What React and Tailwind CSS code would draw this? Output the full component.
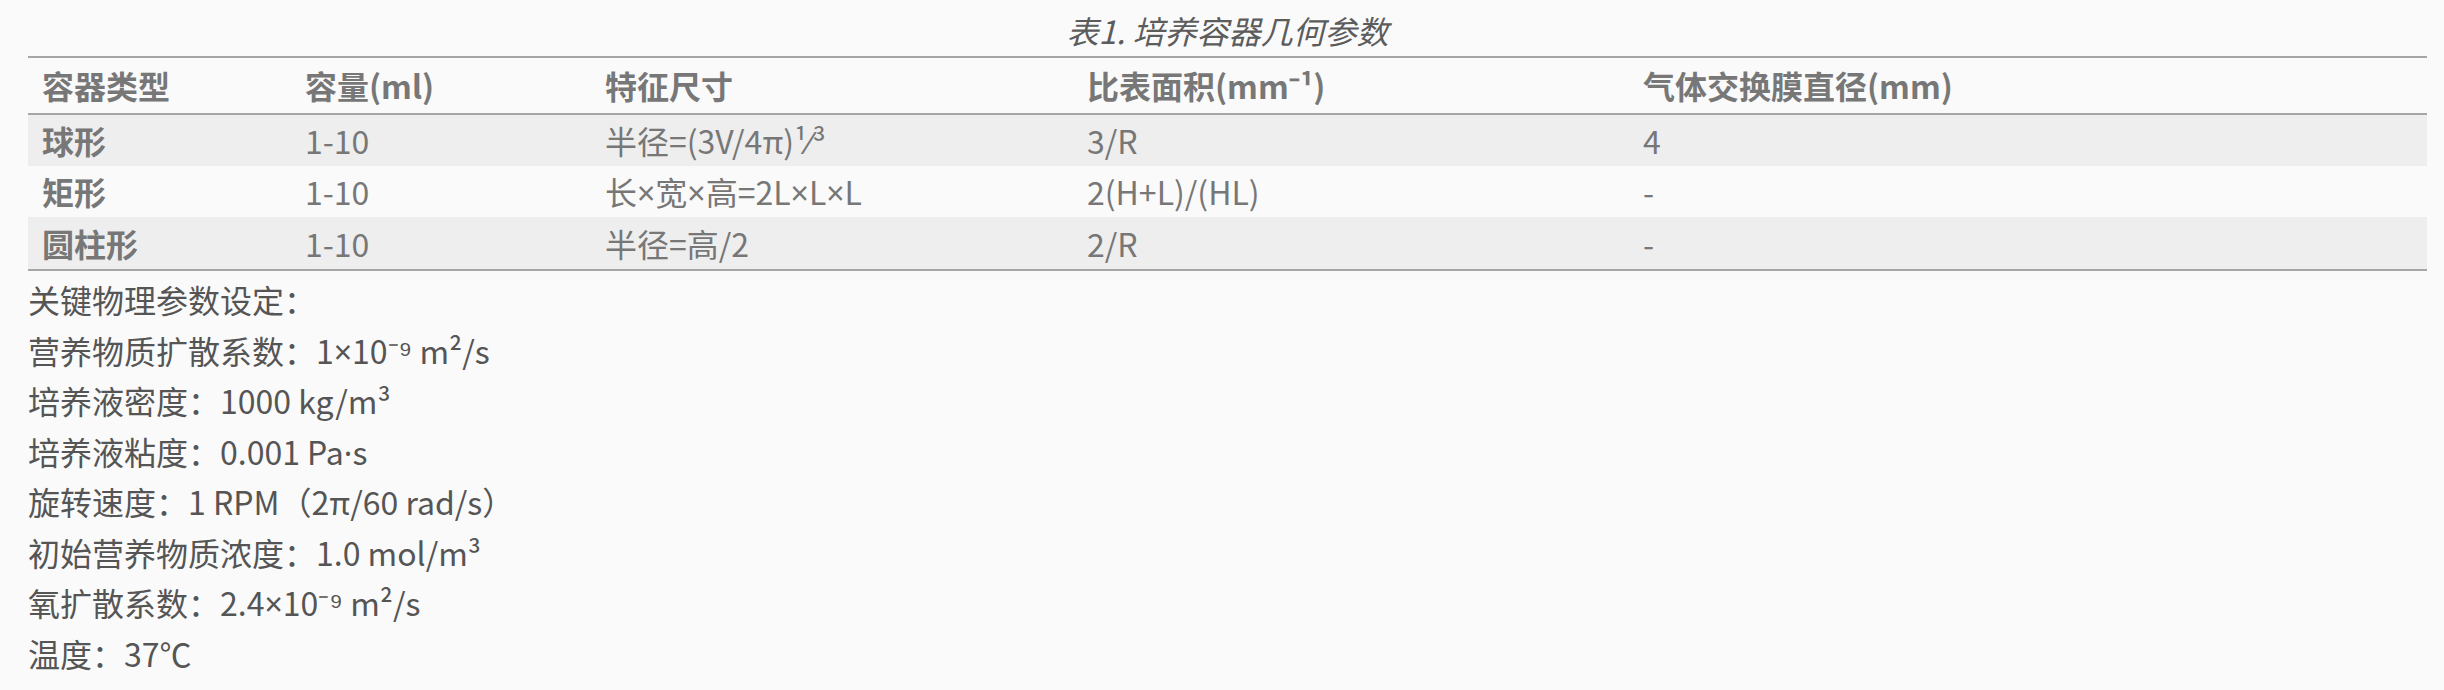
import React from "react";

const rows = [
  { type: "球形", volume: "1-10", size: "半径=(3V/4π)¹⁄³", ratio: "3/R", membrane: "4" },
  { type: "矩形", volume: "1-10", size: "长×宽×高=2L×L×L", ratio: "2(H+L)/(HL)", membrane: "-" },
  { type: "圆柱形", volume: "1-10", size: "半径=高/2", ratio: "2/R", membrane: "-" },
];

const params = [
  "关键物理参数设定：",
  "营养物质扩散系数：1×10⁻⁹ m²/s",
  "培养液密度：1000 kg/m³",
  "培养液粘度：0.001 Pa·s",
  "旋转速度：1 RPM（2π/60 rad/s）",
  "初始营养物质浓度：1.0 mol/m³",
  "氧扩散系数：2.4×10⁻⁹ m²/s",
  "温度：37℃",
];

const headers = ["容器类型", "容量(ml)", "特征尺寸", "比表面积(mm⁻¹)", "气体交换膜直径(mm)"];

// the CJK font draws × and · full width, so give them a latin face
const Txt = ({ children }) =>
  children.split(/([×·])/).map((part, i) =>
    part === "×" || part === "·" ? (
      <span key={i} className="font-['Noto_Sans',sans-serif] leading-none">
        {part}
      </span>
    ) : (
      part
    )
  );

const App = () => {
  return (
    <div className="min-h-[690px] w-full bg-[#fafafa] pl-[28px] pr-[17px] font-['Noto_Sans_CJK_SC',sans-serif] text-[32px]">
      <table className="w-full table-fixed border-separate border-spacing-0 text-left text-[#777777]">
        <caption className="pt-[5px] leading-[51px] italic text-[#5c5c5c]">
          表1. 培养容器几何参数
        </caption>
        <colgroup>
          <col className="w-[263px]" />
          <col className="w-[300px]" />
          <col className="w-[482px]" />
          <col className="w-[556px]" />
          <col />
        </colgroup>
        <thead>
          <tr>
            {headers.map((h) => (
              <th
                key={h}
                className="border-y-2 border-[#a6a6a6] px-[14px] py-[2px] font-bold leading-[51px]"
              >
                {h}
              </th>
            ))}
          </tr>
        </thead>
        <tbody>
          {rows.map((r, i) => {
            const last = i === rows.length - 1;
            const cell = `px-[14px] py-0 h-[51px] leading-[51px] whitespace-nowrap ${
              last ? "border-b-2 border-[#a6a6a6] h-[54px]" : ""
            }`;
            return (
              <tr key={r.type} className={i % 2 === 0 ? "bg-[#eeeeee]" : "bg-[#fafafa]"}>
                <td className={`${cell} font-bold`}>{r.type}</td>
                <td className={cell}>{r.volume}</td>
                <td className={cell}>
                  <Txt>{r.size}</Txt>
                </td>
                <td className={cell}>{r.ratio}</td>
                <td className={cell}>{r.membrane}</td>
              </tr>
            );
          })}
        </tbody>
      </table>

      {/* parameter list under the table */}
      <div className="mt-[3px] flex flex-col text-[#555555] leading-[50.5px]">
        {params.map((p) => (
          <p key={p} className="h-[50.5px]">
            <Txt>{p}</Txt>
          </p>
        ))}
      </div>
    </div>
  );
};

export default App;
